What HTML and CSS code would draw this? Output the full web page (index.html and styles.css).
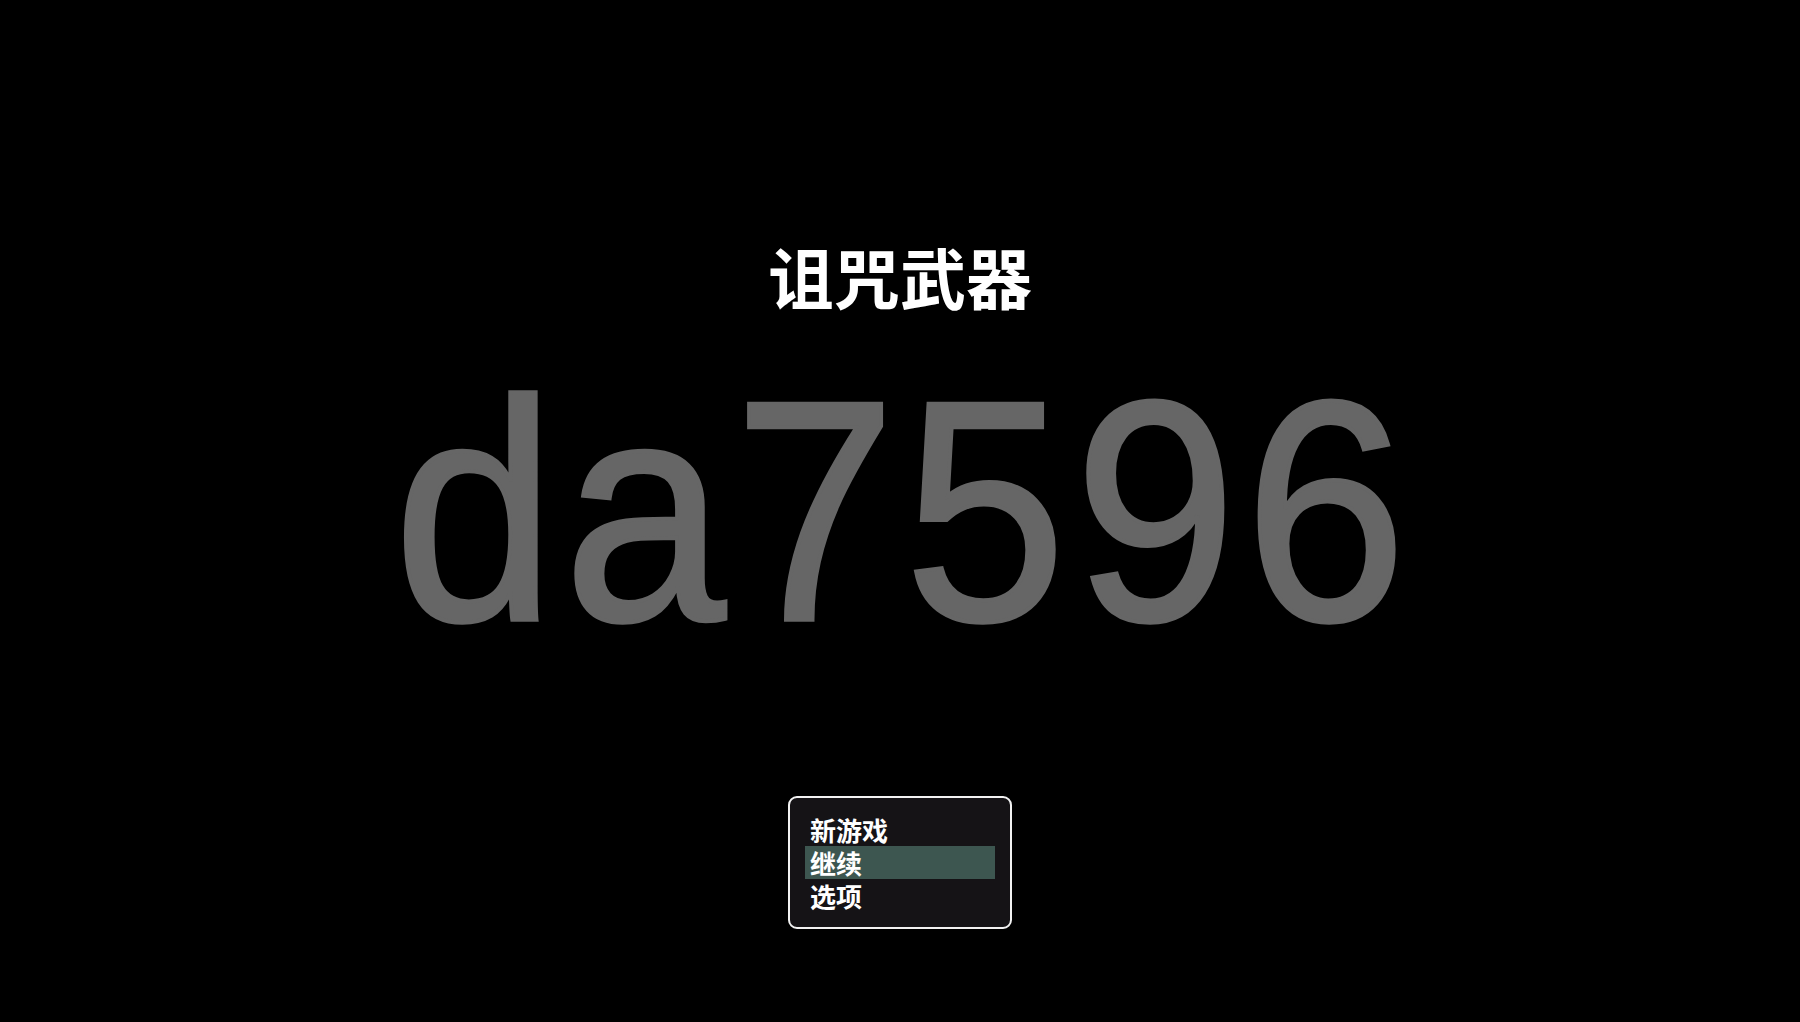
FILE: index.html
```html
<!DOCTYPE html>
<html lang="zh">
<head>
<meta charset="utf-8">
<title>诅咒武器</title>
<link rel="stylesheet" href="styles.css">
</head>
<body>
<main class="screen">
  <h1 class="title">诅咒武器</h1>
  <div class="code">da7596</div>
  <nav class="menu">
    <div class="item">新游戏</div>
    <div class="item selected">继续</div>
    <div class="item">选项</div>
  </nav>
</main>
</body>
</html>
```
FILE: styles.css
```css
html, body {
  margin: 0;
  padding: 0;
  background: #000;
}
.screen {
  width: 1800px;
  height: 1022px;
  display: flex;
  flex-direction: column;
  align-items: center;
  background: #000;
  font-family: "Noto Sans CJK SC", "Noto Sans", sans-serif;
}
.title {
  margin: 242px 0 0 0;
  font-size: 66px;
  line-height: 66px;
  font-weight: 700;
  color: #fff;
  letter-spacing: 0;
}
.code {
  margin-top: 50px;
  font-family: "Liberation Sans", Arial, sans-serif;
  font-weight: 400;
  font-size: 306px;
  line-height: 306px;
  height: 306px;
  letter-spacing: 9px;
  padding-left: 9px;
  color: #666666;
  -webkit-text-stroke: 4px #666666;
  transform: scale(0.95, 1.025);
}
.menu {
  margin-top: 132px;
  width: 190px;
  padding: 15px;
  border: 2px solid #f2f2f2;
  border-radius: 9px;
  background: #151316;
  display: flex;
  flex-direction: column;
}
.item {
  height: 33px;
  line-height: 33px;
  padding-left: 5px;
  font-size: 26px;
  font-weight: 700;
  color: #fff;
}
.item.selected {
  background: #3d5650;
}
```
